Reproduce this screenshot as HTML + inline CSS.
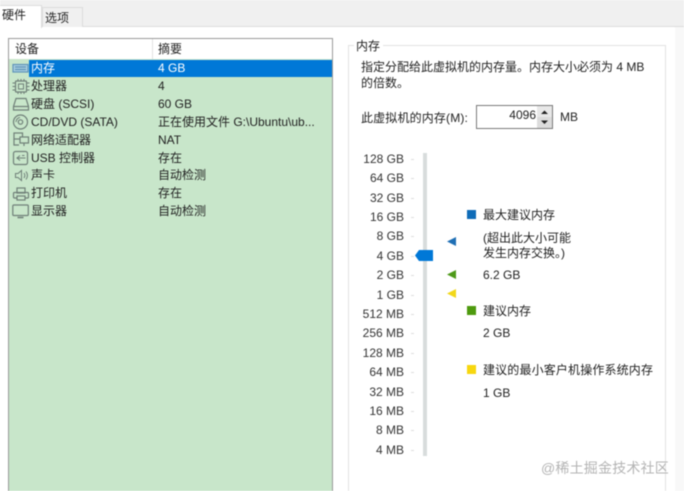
<!DOCTYPE html>
<html><head><meta charset="utf-8">
<style>
html,body{margin:0;padding:0;background:#fff}
#p{position:relative;width:684px;height:491px;overflow:hidden;background:#fff;font-family:"Liberation Sans","Noto Sans CJK SC",sans-serif;font-size:12px;color:#222;filter:blur(.4px)}
#p div,#p svg{position:absolute}
.t{white-space:nowrap;line-height:16px;height:16px}
.r{text-align:right;width:60px;left:344px;color:#333}
.k{left:411px;width:3px;height:1px;background:#ddd}
svg{fill:none;stroke:#6f7f78;stroke-width:1.2}
</style></head><body><div id="p">
<div style="left:0;top:0;width:684px;height:26px;background:#f0f0f0;border-bottom:1px solid #dcdcdc"></div>
<div style="left:0;top:5px;width:41px;height:22px;background:#fff;border:1px solid #dcdcdc;border-left:0;border-bottom:0"></div>
<div style="left:42px;top:7px;width:39px;height:19px;background:#f0f0f0;border:1px solid #dcdcdc;border-bottom:0"></div>
<div class="t" style="left:2px;top:7px">硬件</div>
<div class="t" style="left:45px;top:10px">选项</div>
<div style="left:675px;top:27px;width:9px;height:464px;background:#f8f8f8"></div>

<div style="left:8px;top:38px;width:323px;height:453px;background:#c8e6ca;border:1px solid #9a9a9a;border-bottom:0"></div>
<div style="left:9px;top:39px;width:323px;height:20px;background:#fff"></div>
<div style="left:152px;top:39px;width:1px;height:20px;background:#e2e2e2"></div>
<div class="t" style="left:15px;top:41px">设备</div>
<div class="t" style="left:158px;top:41px">摘要</div>
<div style="left:29px;top:60px;width:303px;height:17px;background:#0078d7"></div>

<svg style="left:12px;top:61px" width="18" height="16"><rect x="1" y="3.500" width="15" height="7.500" fill="#a9cfe0" stroke="#5f94b8"/><path d="M3 6h11M3 8.500h11" stroke="#5f94b8"/></svg>
<svg style="left:12px;top:78px" width="18" height="17"><rect x="3.500" y="3" width="11" height="11" rx="1"/><rect x="6.500" y="6" width="5" height="5" stroke-width="1"/><path d="M0.500 5h3M0.500 8.500h3M0.500 12h3M14.500 5h3M14.500 8.500h3M14.500 12h3M6 1v2M9 1v2M12 1v2M6 14v2M9 14v2M12 14v2" stroke-width="1"/></svg>
<svg style="left:12px;top:96px" width="18" height="17"><path d="M4 2.500h10l2.500 8v3.500h-15v-3.500zM1.500 10.500h15"/></svg>
<svg style="left:12px;top:114px" width="18" height="17"><circle cx="8.500" cy="8" r="7"/><circle cx="8.500" cy="8" r="2.200"/><path d="M4 8a4.500 4.500 0 0 1 4-4.500" stroke-width="1"/></svg>
<svg style="left:12px;top:131px" width="18" height="17"><rect x="2" y="2" width="8.500" height="6"/><rect x="8" y="6" width="8.500" height="6" fill="#c8e6ca"/><path d="M2 8v6h5M12 12v3"/></svg>
<svg style="left:12px;top:149px" width="18" height="17"><rect x="1.500" y="2.500" width="14" height="13" rx="2"/><path d="M4.500 9h9M8 6.500L5 9l3 2.500M10 6.500h2.500" stroke-width="1"/></svg>
<svg style="left:12px;top:167px" width="18" height="17"><path d="M3.500 6.500h2.500l3.500-3v10l-3.500-3h-2.500zM12 6c1 1.500 1 3.500 0 5M14 4.500c1.800 2.500 1.800 5.500 0 8" stroke-width="1"/></svg>
<svg style="left:12px;top:185px" width="18" height="17"><rect x="5" y="3" width="8" height="5"/><rect x="1.500" y="7.500" width="15" height="5.500" rx="1"/><rect x="5" y="11" width="8" height="4" fill="#c8e6ca"/></svg>
<svg style="left:12px;top:203px" width="18" height="17"><rect x="0.800" y="2" width="15.500" height="10.500" rx="1"/><path d="M5.500 14.500h6" stroke-width="1.500"/></svg>

<div class="t" style="left:31px;top:60px;color:#fff">内存</div>
<div class="t" style="left:31px;top:78px">处理器</div>
<div class="t" style="left:31px;top:96px">硬盘 (SCSI)</div>
<div class="t" style="left:31px;top:114px">CD/DVD (SATA)</div>
<div class="t" style="left:31px;top:132px">网络适配器</div>
<div class="t" style="left:31px;top:150px">USB 控制器</div>
<div class="t" style="left:31px;top:167px">声卡</div>
<div class="t" style="left:31px;top:185px">打印机</div>
<div class="t" style="left:31px;top:203px">显示器</div>
<div class="t" style="left:158px;top:60px;color:#fff">4 GB</div>
<div class="t" style="left:158px;top:78px">4</div>
<div class="t" style="left:158px;top:96px">60 GB</div>
<div class="t" style="left:158px;top:114px">正在使用文件 G:\Ubuntu\ub...</div>
<div class="t" style="left:158px;top:132px">NAT</div>
<div class="t" style="left:158px;top:150px">存在</div>
<div class="t" style="left:158px;top:167px">自动检测</div>
<div class="t" style="left:158px;top:185px">存在</div>
<div class="t" style="left:158px;top:203px">自动检测</div>

<div style="left:348px;top:45px;width:316px;height:446px;border:1px solid #e2e2e2;border-bottom:0"></div>
<div class="t" style="left:354px;top:38px;background:#fff;padding:0 3px 0 2px">内存</div>
<div class="t" style="left:361px;top:59px">指定分配给此虚拟机的内存量。内存大小必须为 4 MB</div>
<div class="t" style="left:361px;top:75px">的倍数。</div>
<div class="t" style="left:361px;top:110px;letter-spacing:.15px">此虚拟机的内存(M):</div>
<div style="left:476px;top:105px;width:75px;height:22px;border:1px solid #7a7a7a;background:#fff"></div>
<div class="t" style="left:476px;top:107px;width:60px;text-align:right">4096</div>
<div style="left:537px;top:106px;width:15px;height:11px;background:#e8e8e8"></div>
<div style="left:537px;top:117px;width:15px;height:11px;background:#dcdcdc"></div>
<svg style="left:537px;top:106px" width="15" height="22"><path d="M4 8l3.500-3.500L11 8zM4 14.500h7L7.500 18z" fill="#222" stroke="none"/></svg>
<div class="t" style="left:560px;top:109px">MB</div>

<div class="t r" style="top:151px">128 GB</div><div class="k" style="top:159px"></div>
<div class="t r" style="top:170px">64 GB</div><div class="k" style="top:178px"></div>
<div class="t r" style="top:190px">32 GB</div><div class="k" style="top:198px"></div>
<div class="t r" style="top:209px">16 GB</div><div class="k" style="top:217px"></div>
<div class="t r" style="top:228px">8 GB</div><div class="k" style="top:236px"></div>
<div class="t r" style="top:248px">4 GB</div><div class="k" style="top:256px"></div>
<div class="t r" style="top:267px">2 GB</div><div class="k" style="top:275px"></div>
<div class="t r" style="top:287px">1 GB</div><div class="k" style="top:295px"></div>
<div class="t r" style="top:306px">512 MB</div><div class="k" style="top:314px"></div>
<div class="t r" style="top:325px">256 MB</div><div class="k" style="top:333px"></div>
<div class="t r" style="top:345px">128 MB</div><div class="k" style="top:353px"></div>
<div class="t r" style="top:364px">64 MB</div><div class="k" style="top:372px"></div>
<div class="t r" style="top:384px">32 MB</div><div class="k" style="top:392px"></div>
<div class="t r" style="top:403px">16 MB</div><div class="k" style="top:411px"></div>
<div class="t r" style="top:422px">8 MB</div><div class="k" style="top:430px"></div>
<div class="t r" style="top:442px">4 MB</div><div class="k" style="top:450px"></div>

<div style="left:423px;top:153px;width:4px;height:303px;background:#d8dcdc"></div>
<svg style="left:414px;top:249px" width="20" height="13"><path d="M1 6.500L5 1h14v11H5z" fill="#0078d7" stroke="none"/></svg>
<svg style="left:446px;top:236px" width="11" height="11"><path d="M1 5.500L10 1v9z" fill="#1f6fb5" stroke="none"/></svg>
<svg style="left:446px;top:269px" width="11" height="11"><path d="M1 5.500L10 1v9z" fill="#4e9a1a" stroke="none"/></svg>
<svg style="left:446px;top:288px" width="11" height="11"><path d="M1 5.500L10 1v9z" fill="#f2d81a" stroke="none"/></svg>

<div style="left:467px;top:210px;width:9px;height:9px;background:#0f6cb8"></div>
<div class="t" style="left:483px;top:207px">最大建议内存</div>
<div class="t" style="left:483px;top:230px">(超出此大小可能</div>
<div class="t" style="left:483px;top:245px">发生内存交换。)</div>
<div class="t" style="left:483px;top:267px">6.2 GB</div>
<div style="left:467px;top:306px;width:9px;height:9px;background:#4e9a0e"></div>
<div class="t" style="left:483px;top:303px">建议内存</div>
<div class="t" style="left:483px;top:325px">2 GB</div>
<div style="left:467px;top:365px;width:9px;height:9px;background:#f7d70f"></div>
<div class="t" style="left:483px;top:362px;letter-spacing:.15px">建议的最小客户机操作系统内存</div>
<div class="t" style="left:483px;top:385px">1 GB</div>

<div class="t" style="left:541px;top:459px;font-size:14px;letter-spacing:.2px;color:#b4b4b4;line-height:18px;height:18px">@稀土掘金技术社区</div>
</div></body></html>
